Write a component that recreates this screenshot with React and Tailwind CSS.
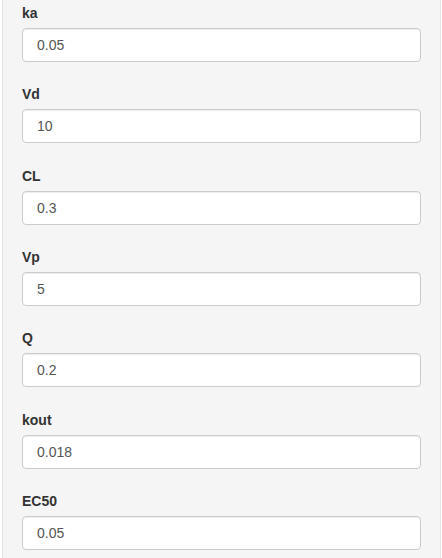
import React from 'react';

const params = [
  { name: 'ka', value: '0.05' },
  { name: 'Vd', value: '10' },
  { name: 'CL', value: '0.3' },
  { name: 'Vp', value: '5' },
  { name: 'Q', value: '0.2' },
  { name: 'kout', value: '0.018' },
  { name: 'EC50', value: '0.05' },
];

const App = () => {
  return (
    <div className="h-[558px] w-[442px] overflow-hidden bg-white pl-[2px] pr-[1px] font-['Liberation_Sans',Arial,sans-serif]">
      <div className="h-full border-x border-[#e3e3e3] bg-[#f5f5f5] px-[19px] pt-[3px]">
        {params.map((p) => (
          <div key={p.name} className="mb-[22.33px]">
            <label className="mb-[5px] block text-[14px] font-bold leading-5 text-[#333]">{p.name}</label>
            <input
              type="text"
              defaultValue={p.value}
              className="block h-[34px] w-full rounded-[4px] border border-[#ccc] bg-white pl-[14px] pr-3 text-[14px] text-[#555] shadow-[inset_0_1px_1px_rgba(0,0,0,0.075)] outline-none"
            />
          </div>
        ))}
      </div>
    </div>
  );
};

export default App;
